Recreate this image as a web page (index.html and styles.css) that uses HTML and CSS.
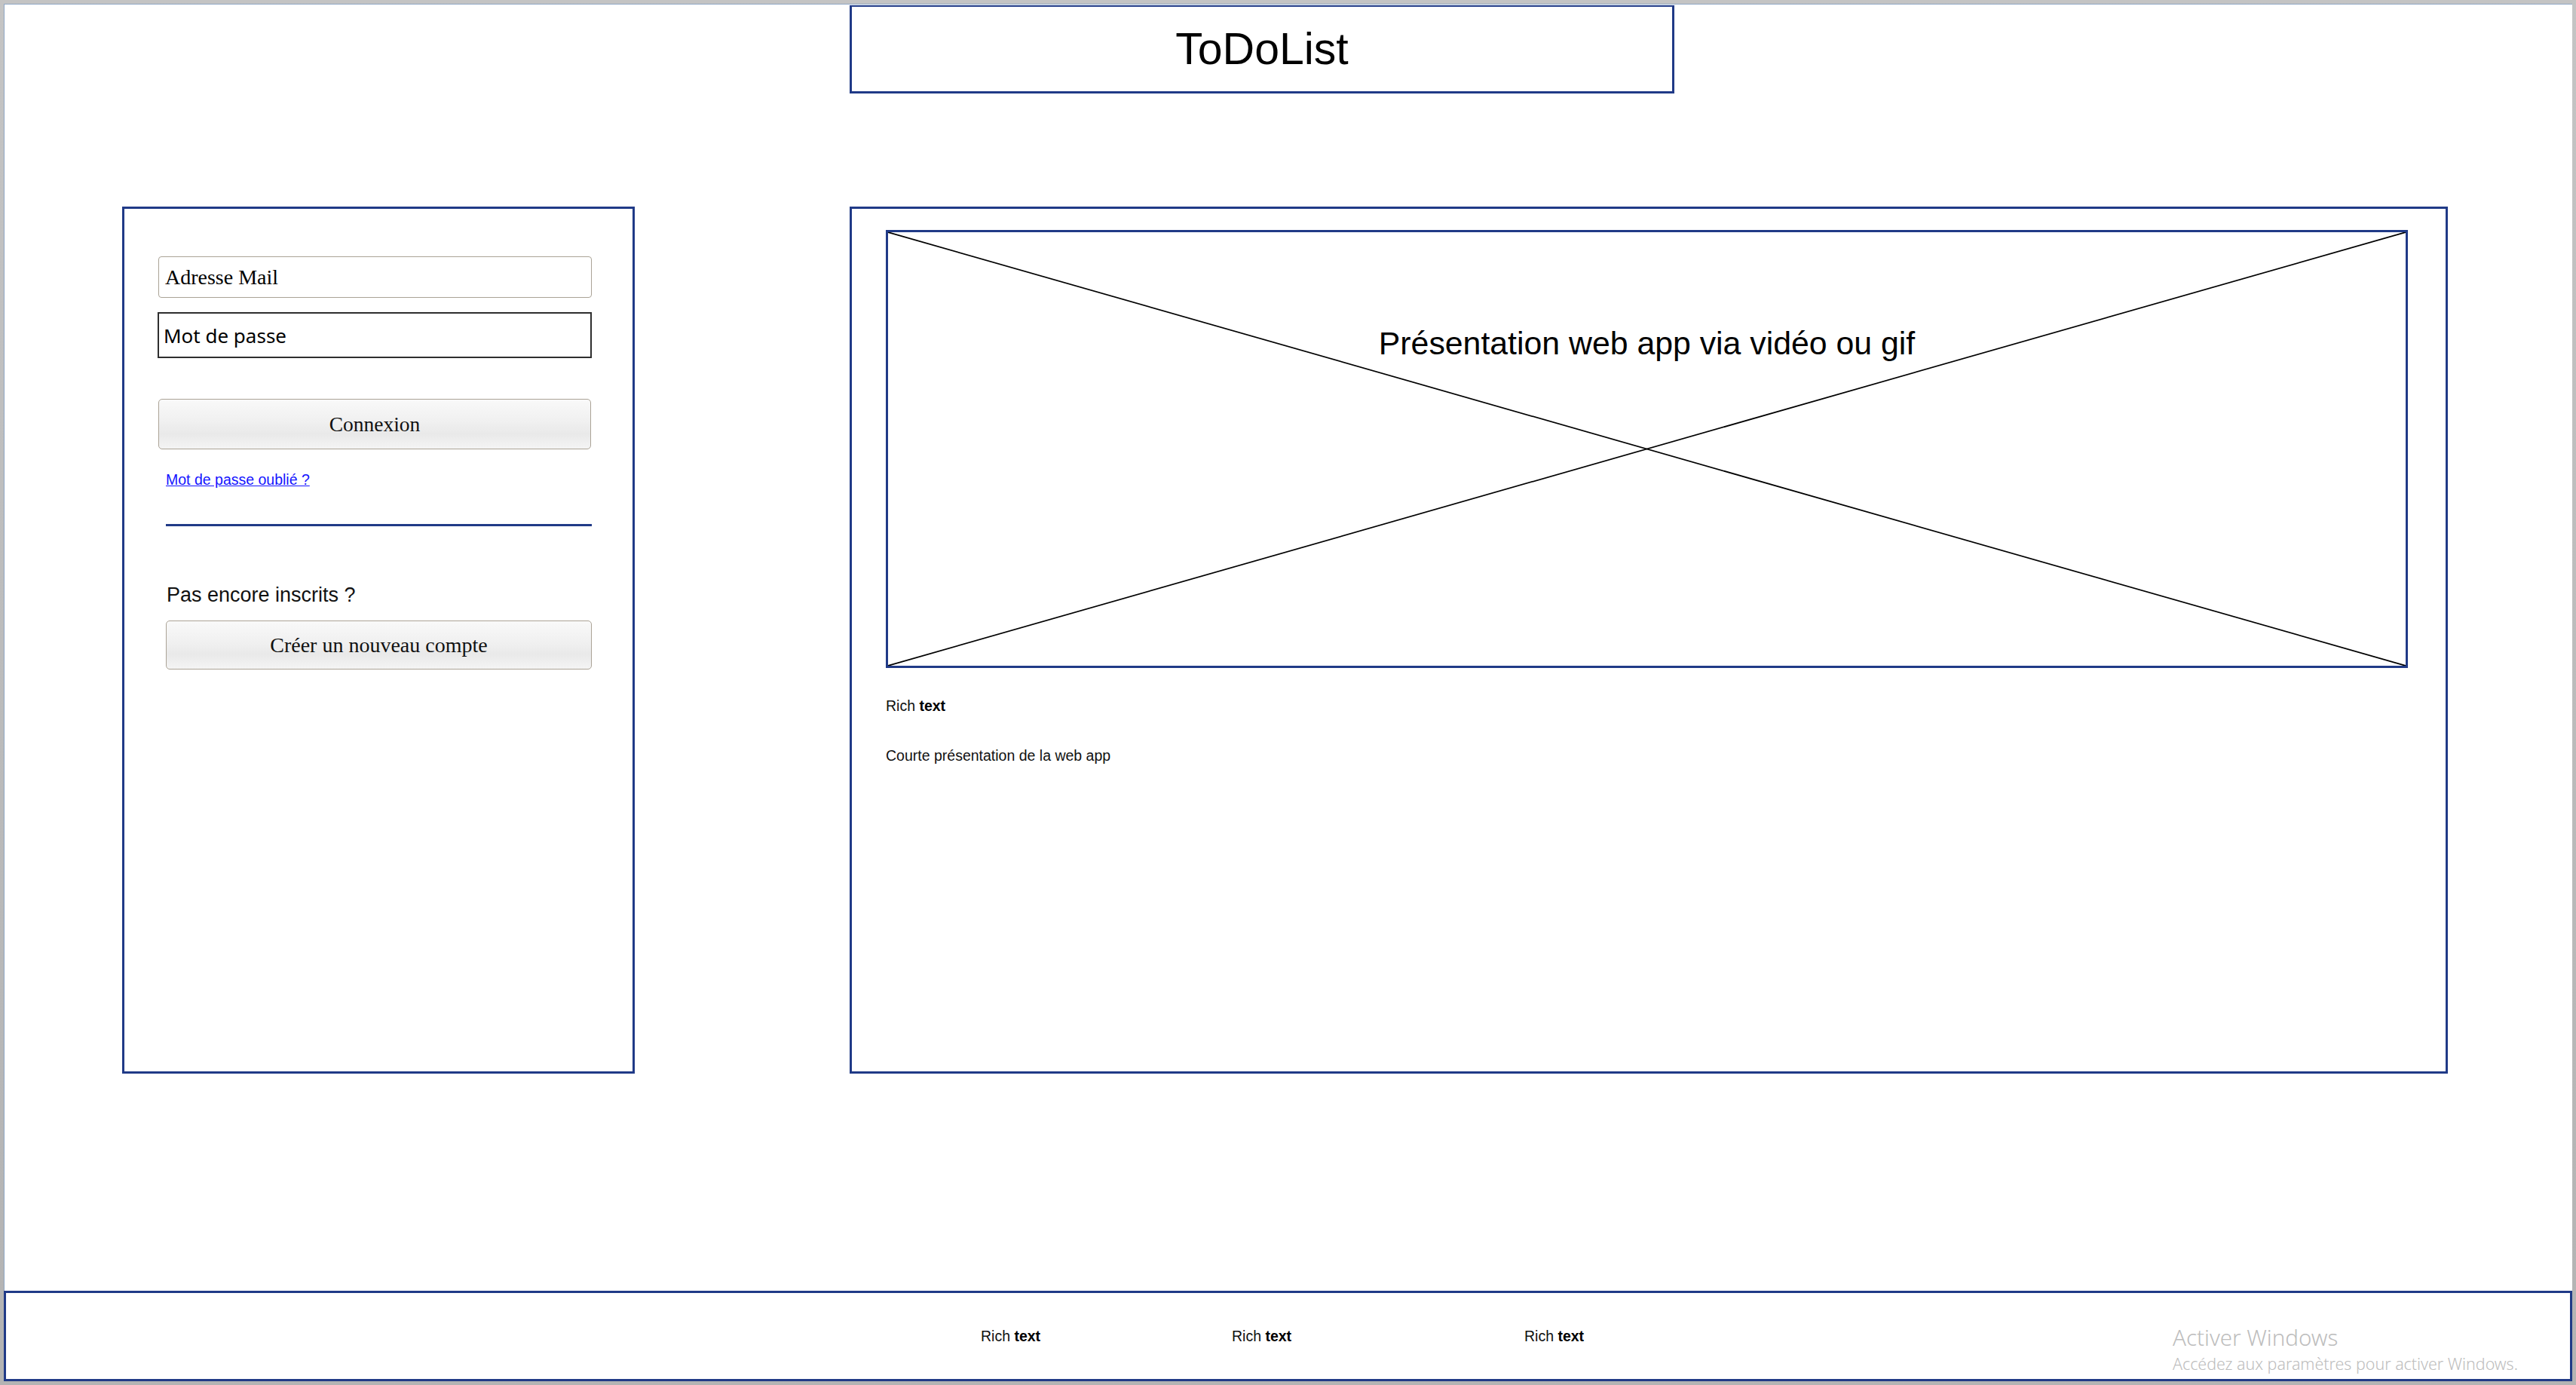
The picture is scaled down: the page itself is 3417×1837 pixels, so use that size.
FILE: index.html
```html
<!DOCTYPE html>
<html lang="fr">
<head>
<meta charset="utf-8">
<title>ToDoList</title>
<link rel="stylesheet" href="styles.css">
</head>
<body>
<div class="window">
  <div class="layout">
    <header class="title-box"><h1 class="title">ToDoList</h1></header>

    <section class="login">
      <div class="field field-mail">Adresse Mail</div>
      <div class="field field-pass">Mot de passe</div>
      <div class="btn btn-login">Connexion</div>
      <a class="forgot" href="#">Mot de passe oublié ?</a>
      <div class="divider"></div>
      <p class="signup-label">Pas encore inscrits ?</p>
      <div class="btn btn-signup">Créer un nouveau compte</div>
    </section>

    <section class="panel">
      <div class="media">
        <svg class="media-cross" viewBox="0 0 100 100" preserveAspectRatio="none" aria-hidden="true">
          <line x1="0" y1="0" x2="100" y2="100" />
          <line x1="0" y1="100" x2="100" y2="0" />
        </svg>
        <p class="media-label">Présentation web app via vidéo ou gif</p>
      </div>
      <p class="rich rich-panel">Rich <b>text</b></p>
      <p class="desc">Courte présentation de la web app</p>
    </section>
  </div>

  <footer class="footer">
    <p class="rich">Rich <b>text</b></p>
    <p class="rich">Rich <b>text</b></p>
    <p class="rich">Rich <b>text</b></p>
  </footer>

  <div class="watermark">
    <p class="wm-title">Activer Windows</p>
    <p class="wm-sub">Accédez aux paramètres pour activer Windows.</p>
  </div>
</div>
</body>
</html>
```

FILE: styles.css
```css
* { box-sizing: border-box; }

html, body {
  margin: 0;
  padding: 0;
  height: 1837px;
  overflow: hidden;
}

body {
  background: linear-gradient(#c4c4c4, #b3b3b3);
  font-family: "Liberation Sans", Arial, sans-serif;
  color: #000;
}

p, h1 { margin: 0; }

.window {
  position: relative;
  margin: 5px;
  height: 1827px;
  background: #fff;
  box-shadow: inset 1px 1px 0 #8ea6c4;
  display: flex;
  flex-direction: column;
}

.layout {
  display: grid;
  grid-template-columns: 680px 2120px;
  grid-template-rows: 117px auto;
  column-gap: 285px;
  row-gap: 150px;
  padding-left: 157px;
  padding-top: 2px;
}

/* ---------- title ---------- */
.title-box {
  grid-column: 2;
  grid-row: 1;
  width: 1094px;
  height: 117px;
  border: 3px solid #203a87;
  border-top-width: 2px;
  display: flex;
  align-items: center;
  justify-content: center;
}

.title {
  font-family: "Liberation Sans", Arial, sans-serif;
  font-weight: normal;
  font-size: 59px;
  line-height: 1;
}

/* ---------- login card ---------- */
.login {
  grid-column: 1;
  grid-row: 2;
  height: 1150px;
  border: 3px solid #203a87;
  display: flex;
  flex-direction: column;
  align-items: flex-start;
}

.field {
  display: flex;
  align-items: center;
  background: #fff;
}

.field-mail {
  margin: 63px 0 0 45px;
  width: 575px;
  height: 55px;
  border: 1px solid #aaa396;
  border-radius: 4px;
  padding-left: 8px;
  font-family: "Liberation Serif", "Times New Roman", serif;
  font-size: 28px;
  line-height: 1;
}

.field-pass {
  margin: 19px 0 0 44px;
  width: 576px;
  height: 61px;
  border: 2px solid #2e2e2e;
  padding: 0 0 0 6px;
  font-family: "Comic Sans MS", "Noto Sans", sans-serif;
  font-size: 26px;
  line-height: 1;
}

.btn {
  display: flex;
  align-items: center;
  justify-content: center;
  border: 1px solid #aba396;
  border-radius: 5px;
  background: linear-gradient(#f9f9f9 0%, #f0f0f0 45%, #e9e9e9 70%, #f4f4f4 100%);
  font-family: "Liberation Serif", "Times New Roman", serif;
  font-size: 28px;
  line-height: 1;
  color: #111;
}

.btn-login {
  margin: 54px 0 0 45px;
  width: 574px;
  height: 67px;
  font-size: 27.5px;
}

.forgot {
  margin: 30px 0 0 55px;
  font-size: 19.5px;
  line-height: 20px;
  color: #1414ff;
  text-decoration: underline;
}

.divider {
  margin: 49px 0 0 55px;
  width: 565px;
  height: 3px;
  background: #203a87;
}

.signup-label {
  margin: 78px 0 0 56px;
  font-size: 27px;
  line-height: 27px;
  color: #111;
}

.btn-signup {
  margin: 20px 0 0 55px;
  width: 565px;
  height: 65px;
}

/* ---------- presentation panel ---------- */
.panel {
  grid-column: 2;
  grid-row: 2;
  height: 1150px;
  border: 3px solid #203a87;
  padding: 28px 50px 0 45px;
}

.media {
  position: relative;
  height: 581px;
  border: 3px solid #203a87;
  padding-top: 126px;
  text-align: center;
}

.media-cross {
  position: absolute;
  inset: 0;
  width: 100%;
  height: 100%;
}

.media-cross line {
  stroke: #000;
  stroke-width: 1.7;
  vector-effect: non-scaling-stroke;
}

.media-label {
  position: relative;
  font-size: 42.8px;
  line-height: 1;
}

.rich {
  font-size: 19.5px;
  line-height: 20px;
  color: #111;
  white-space: nowrap;
}

.rich b { font-weight: bold; color: #000; }

.rich-panel { margin-top: 40px; }

.desc {
  margin-top: 46px;
  font-size: 19.5px;
  line-height: 20px;
  color: #111;
}

/* ---------- footer ---------- */
.footer {
  margin-top: auto;
  height: 120px;
  border: 3px solid #203a87;
  display: grid;
  grid-template-columns: 333px 388px auto;
  align-items: center;
  padding-left: 1293px;
}

/* ---------- OS activation watermark (overlay) ---------- */
.watermark {
  position: absolute;
  left: 2877px;
  top: 1754px;
  font-family: "Noto Sans", "Open Sans", sans-serif;
  color: #bdbdbd;
  pointer-events: none;
}

.wm-title {
  font-size: 29.5px;
  line-height: 29px;
  font-weight: 300;
}

.wm-sub {
  margin-top: 10px;
  font-size: 21.4px;
  line-height: 21px;
  font-weight: 300;
}
```
